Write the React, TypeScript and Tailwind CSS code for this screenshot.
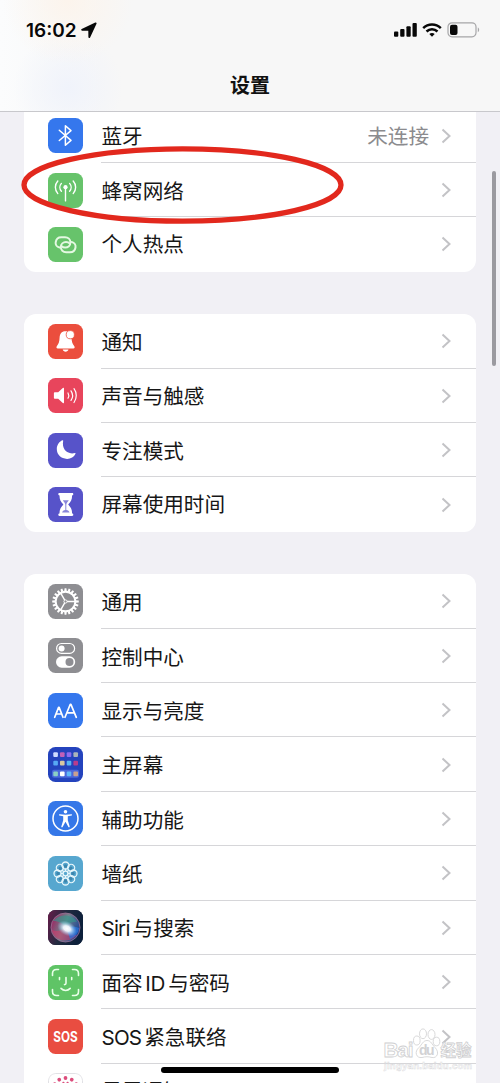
import type { ReactNode } from "react";

type Item = {
  label: string;
  value?: string;
  bg: string;
  icon: ReactNode;
};

const homeDots = [
  ["#cfdcff", "#c060b8", "#8c6cf0", "#a9b4ba"],
  ["#58a8f4", "#d8c8a0", "#58b4f4", "#b83c8c"],
  ["#8cd0c4", "#ffffff", "#60b8f8", "#c8a090"],
];

const gearTeeth = Array.from({ length: 20 }, (_, i) => i * 18);
const petals = Array.from({ length: 8 }, (_, i) => i * 45);

const BluetoothIcon = (
  <path
    d="M11.3 12.2 23 22.4l-5.6 4.8V7.8l5.6 4.8-11.7 9.9"
    fill="none"
    stroke="#fff"
    strokeWidth="1.5"
    strokeLinejoin="round"
    strokeLinecap="round"
  />
);

const CellularIcon = (
  <g fill="none" stroke="#fff" strokeWidth="1.4" strokeLinecap="round">
    <circle cx="17.5" cy="14.2" r="2.1" fill="#fff" stroke="none" />
    <path d="M17.5 14.5v13.4" />
    <path d="M13.4 10.4a5.8 5.8 0 0 0 0 7.8M21.6 10.4a5.8 5.8 0 0 1 0 7.8" />
    <path d="M9.8 8a9.4 9.4 0 0 0 0 12.6M25.2 8a9.4 9.4 0 0 1 0 12.6" />
  </g>
);

const HotspotIcon = (
  <g fill="none" stroke="#e4f8e2" strokeWidth="2" strokeLinecap="round">
    <path d="M11.5 20.6c-2.8-.6-4.2-3-3.8-5.5.5-2.9 2.7-4.800 5.500-4.800h3.800c3.200 0 5.400 2.200 5.400 5.200s-2.400 5.100-5.200 5.100c-1.500 0-2.800-.5-3.600-1.500" />
    <path d="M23.700 15c2.800.6 4.200 3 3.800 5.500-.5 2.900-2.700 4.800-5.500 4.800h-3.800c-3.200 0-5.400-2.200-5.400-5.200S15.200 15 18 15c1.500 0 2.800.5 3.600 1.500" />
  </g>
);

const BellIcon = (
  <g fill="#fff">
    <path d="M17.4 7.2c-3.900 0-5.600 2.700-5.800 6.200-.2 4-.8 6.200-2.700 8.500-.9 1.200-.5 2.500.9 2.500h15.500c1.400 0 1.800-1.300.9-2.500-1.900-2.300-2.500-4.500-2.700-8.500-.2-3.500-2.200-6.200-6.100-6.200z" />
    <path d="M14.700 25.600h5.800c-.4 1.300-1.500 2.100-2.900 2.100s-2.500-.8-2.900-2.100z" />
    <circle cx="22.3" cy="10.7" r="4.100" stroke="#eb4e3d" strokeWidth=".8" />
  </g>
);

const SoundIcon = (
  <g fill="none" stroke="#fff" strokeWidth="1.2" strokeLinecap="round">
    <path
      d="M6.800 14.300h3.400l4.600-4.200c.6-.5 1.200-.2 1.200.5v13.800c0 .7-.6 1-1.200.5l-4.600-4.200H6.800c-.6 0-.9-.3-.9-.8v-4.800c0-.5.3-.8.9-.8z"
      fill="#fff"
      stroke="none"
    />
    <path d="M20 15c.9 1.500.9 3.700 0 5.200M23 12.800c1.900 2.800 1.900 6.800 0 9.600M26 10.700c3 4 3 9.800 0 13.800" />
  </g>
);

const MoonIcon = (
  <path
    d="M15.200 7.800c-1.700 8 3.900 14.200 11.800 12.200.5-.1.700.2.5.7-1.500 3.300-4.600 5.200-8.400 5.200-6 0-10.300-4.200-10.300-9.800 0-3.900 2.200-7.400 5.700-8.800.5-.2.800 0 .7.500z"
    fill="#fff"
  />
);

const HourglassIcon = (
  <g>
    <path
      d="M11.400 6h12.800c.7 0 1.100.5 1.100 1.200s-.5 1.200-1.200 1.200c0 4-1.200 6.200-3.900 9.100 2.700 2.900 3.900 5.100 3.900 9.100.7 0 1.200.5 1.200 1.200s-.4 1.200-1.100 1.200H11.400c-.7 0-1.100-.5-1.100-1.200s.5-1.200 1.200-1.200c0-4 1.200-6.200 3.900-9.100-2.700-2.900-3.900-5.100-3.900-9.100-.7 0-1.200-.5-1.200-1.200S10.700 6 11.400 6z"
      fill="#fff"
    />
    <path
      d="M14.800 13.200h6c-.6 1.500-2.500 2.600-2.500 4.600v5.300c1.800.4 2.700 1.100 3.200 2.300h-7.400c.5-1.200 1.400-1.900 3.200-2.300v-5.300c0-2-1.900-3.100-2.500-4.600z"
      fill="#5753c9"
      opacity=".7"
    />
  </g>
);

const GearIcon = (
  <g fill="none" stroke="#fff">
    {gearTeeth.map((deg) => (
      <path
        key={deg}
        d="M16.600 4.200h1.800l.4 3.200h-2.600z"
        fill="#fff"
        stroke="none"
        transform={`rotate(${deg} 17.5 17.5)`}
      />
    ))}
    <circle cx="17.5" cy="17.5" r="9.8" strokeWidth="1.9" />
    <circle cx="17.5" cy="17.5" r="1.6" strokeWidth="1" />
    <path d="M19.100 17.500h7.900M16.700 16.100l-4-6.900M16.700 18.900l-4 6.900" strokeWidth="1.4" />
  </g>
);

const ControlIcon = (
  <g>
    <rect x="8.6" y="5.5" width="18" height="9.8" rx="4.9" fill="none" stroke="#fff" strokeWidth="1.2" />
    <circle cx="13.6" cy="10.4" r="3" fill="#fff" />
    <rect x="8" y="18.3" width="19.2" height="11.4" rx="5.7" fill="#fff" />
    <circle cx="21.5" cy="24" r="4" fill="#8e8e93" />
  </g>
);

const DisplayIcon = (
  <g fill="none" stroke="#fff" strokeWidth="1.7" strokeLinecap="round" strokeLinejoin="round">
    <path d="m6.700 24.300 3.900-9.900h.5l3.900 9.900M8.100 21h5.500" />
    <path d="m17 24.300 5.300-13h.6l5.400 13M19 19.900h7.300" />
  </g>
);

const HomeScreenIcon = (
  <g>
    <rect x="4" y="22.8" width="27" height="8" rx="2" fill="#4a68dc" />
    {homeDots.map((row, y) =>
      row.map((color, x) => (
        <rect
          key={`${x}-${y}`}
          x={5.3 + x * 6.7}
          y={[5.3, 13.8, 24.6][y]}
          width="4.6"
          height="4.6"
          rx="1"
          fill={color}
        />
      ))
    )}
  </g>
);

const AccessibilityIcon = (
  <g>
    <circle cx="17.5" cy="17.5" r="12.5" fill="none" stroke="#fff" strokeWidth="1.5" />
    <circle cx="17.5" cy="10.8" r="1.8" fill="#fff" />
    <path
      d="M11.700 13.300c3.900.5 7.700.5 11.600 0 .9-.1 1.100 1 .3 1.200l-3.800.8v4l1.900 6.300c.2.800-.9 1.200-1.300.4L17.500 20.700 14.600 26c-.4.800-1.500.4-1.300-.4l1.900-6.300v-4l-3.800-.8c-.8-.2-.6-1.300.3-1.200z"
      fill="#fff"
    />
  </g>
);

const WallpaperIcon = (
  <g fill="none" stroke="#e6f6fb" strokeWidth="1.3">
    {petals.map((deg) => (
      <g key={deg} transform={`rotate(${deg} 17.5 17.5)`}>
        <circle cx="17.5" cy="9.5" r="3.500" />
        <circle cx="17.5" cy="10" r="1.700" fill="#3c86ae" stroke="none" />
        <path d="M17.500 13v2" />
      </g>
    ))}
    <circle cx="17.5" cy="17.5" r="2.4" />
  </g>
);

const SiriIcon = (
  <g>
    <defs>
      <linearGradient id="siri-edge" x1="0" x2="1" y1="0" y2=".3">
        <stop offset="0" stopColor="#671b49" />
        <stop offset=".5" stopColor="#222b40" />
        <stop offset="1" stopColor="#0c203b" />
      </linearGradient>
      <linearGradient id="siri-orb" x1="0" x2="1" y1=".3" y2=".7">
        <stop offset="0" stopColor="#9c2662" />
        <stop offset=".45" stopColor="#70848d" />
        <stop offset="1" stopColor="#143c91" />
      </linearGradient>
      <radialGradient id="siri-glow">
        <stop offset="0" stopColor="#fff" />
        <stop offset=".35" stopColor="#f2f8ff" stopOpacity=".95" />
        <stop offset="1" stopColor="#8ac7ef" stopOpacity="0" />
      </radialGradient>
    </defs>
    <rect width="35" height="35" fill="url(#siri-edge)" />
    <circle cx="17.5" cy="17.5" r="14.5" fill="url(#siri-orb)" stroke="#9c7095" strokeWidth=".8" />
    <path d="M5 11c7-8 19-7 24 1-6-1-9 3-11 6-3-5-7-7-13-7z" fill="#31988c" opacity=".6" />
    <path d="M4 20c6 3 10-1 14-2 3 3 6 7 11 7-8 9-22 7-25-5z" fill="#d73969" opacity=".55" />
    <path d="M18 18c5-2 9-2 13 0-1 6-4 9-9 11-1-4-2-7-4-11z" fill="#2774dd" opacity=".75" />
    <ellipse cx="19" cy="18.5" rx="10.500" ry="7" fill="url(#siri-glow)" transform="rotate(28 19 18.5)" />
  </g>
);

const FaceIdIcon = (
  <g fill="none" stroke="#e9ffe9" strokeWidth="1.6" strokeLinecap="round">
    <path d="M4.500 10.500v-2c0-2.600 1.400-4 4-4h2M24.500 4.500h2c2.600 0 4 1.400 4 4v2M30.500 24.500v2c0 2.600-1.400 4-4 4h-2M10.500 30.500h-2c-2.600 0-4-1.400-4-4v-2" />
    <path d="M11.500 12.600v2M23.700 12.600v2M18 12.600v5.700c0 .9-.5 1.300-1.500 1.300M13 23.400c2.500 2.700 6.700 2.700 9.200 0" />
  </g>
);

const SosIcon = (
  <text
    x="17.5"
    y="22.5"
    textAnchor="middle"
    textLength="24.5"
    lengthAdjust="spacingAndGlyphs"
    fill="#fff"
    className="font-['Inter','Liberation_Sans',sans-serif] text-[14px] font-bold"
  >
    SOS
  </text>
);

const ExposureIcon = (
  <g fill="#dc4d7c">
    <rect x=".5" y=".5" width="34" height="34" rx="7" fill="#fff" stroke="#d9d9de" strokeWidth=".8" />
    {Array.from({ length: 12 }, (_, i) => (
      <circle key={i} cx="17.5" cy="5" r="1.9" transform={`rotate(${i * 30} 17.5 17.5)`} />
    ))}
    {Array.from({ length: 12 }, (_, i) => (
      <circle key={i} cx="17.5" cy="9.6" r="1.1" transform={`rotate(${i * 30 + 15} 17.5 17.5)`} />
    ))}
  </g>
);

const groups: Item[][] = [
  [
    { label: "蓝牙", value: "未连接", bg: "bg-[#3577ed]", icon: BluetoothIcon },
    { label: "蜂窝网络", bg: "bg-[#67c36b]", icon: CellularIcon },
    { label: "个人热点", bg: "bg-[#67c36b]", icon: HotspotIcon },
  ],
  [
    { label: "通知", bg: "bg-[#eb4e3d]", icon: BellIcon },
    { label: "声音与触感", bg: "bg-[#e8455c]", icon: SoundIcon },
    { label: "专注模式", bg: "bg-[#5753c9]", icon: MoonIcon },
    { label: "屏幕使用时间", bg: "bg-[#5753c9]", icon: HourglassIcon },
  ],
  [
    { label: "通用", bg: "bg-[#8e8e92]", icon: GearIcon },
    { label: "控制中心", bg: "bg-[#8e8e92]", icon: ControlIcon },
    { label: "显示与亮度", bg: "bg-[#3577ed]", icon: DisplayIcon },
    { label: "主屏幕", bg: "bg-[#2443bd]", icon: HomeScreenIcon },
    { label: "辅助功能", bg: "bg-[#3577e8]", icon: AccessibilityIcon },
    { label: "墙纸", bg: "bg-[#57a7cf]", icon: WallpaperIcon },
    { label: "Siri与搜索", bg: "bg-[#252b40]", icon: SiriIcon },
    { label: "面容ID与密码", bg: "bg-[#5fc466]", icon: FaceIdIcon },
    { label: "SOS紧急联络", bg: "bg-[#e94d41]", icon: SosIcon },
    { label: "暴露通知", bg: "bg-white", icon: ExposureIcon },
  ],
];

// Latin runs sit slightly tighter than the Chinese text around them
function Label({ text, last }: { text: string; last: boolean }) {
  return (
    <span className={`text-[20.6px] leading-none text-[#161616] ${last ? "pt-[3px]" : "pt-[5px]"}`}>
      {text.split(/([A-Za-z]+)/).filter(Boolean).map((part, i) =>
        /[A-Za-z]/.test(part) ? (
          <span key={i} className={i > 0 ? "ml-[2.5px] mr-[3px] tracking-[-0.2px]" : "mr-[3px] tracking-[-0.8px]"}>
            {part}
          </span>
        ) : (
          part
        )
      )}
    </span>
  );
}

function Row({ item, last }: { item: Item; last: boolean }) {
  return (
    <div className="flex h-[54.4px] items-center pl-6">
      <div className={`size-[35px] shrink-0 overflow-hidden rounded-[7.5px] ${item.bg}`}>
        <svg viewBox="0 0 35 35" className="size-full">
          {item.icon}
        </svg>
      </div>
      <div
        className={`ml-[18px] flex h-full flex-1 items-center border-b pl-[0.5px] pr-[25px] ${
          last ? "border-transparent" : "border-[#d6d6d9]"
        }`}
      >
        <Label text={item.label} last={last} />
        {item.value && (
          <span className="ml-auto pt-[5px] text-[20.6px] leading-none text-[#8b8b8e]">{item.value}</span>
        )}
        <svg
          viewBox="0 0 10 16"
          className={`mt-px h-4 w-[10px] ${item.value ? "ml-[12px]" : "ml-auto"}`}
          fill="none"
          stroke="#c3c3c6"
          strokeWidth="2"
        >
          <path d="m1.500 1.500 7 6.500-7 6.500" />
        </svg>
      </div>
    </div>
  );
}

function StatusBar() {
  return (
    <div className="flex h-[60px] items-center pl-[26px] pr-[20px] text-[#080808]">
      <span className="pt-[2px] text-[19px] font-semibold">16:02</span>
      <svg viewBox="0 0 16 16" className="ml-[4px] size-[16px]" fill="currentColor">
        <path d="M14.300.6.700 7c-1 .5-.7 1.700.4 1.700l6.200.1.100 6.200c0 1.100 1.200 1.400 1.700.4L15.500 1.800c.4-.8-.4-1.600-1.200-1.200z" />
      </svg>
      <div className="ml-auto flex items-center">
        <svg viewBox="0 0 23 14" className="h-[14px] w-[23px]" fill="currentColor">
          <rect x="0" y="8.5" width="4.300" height="5.300" rx="1" />
          <rect x="6.2" y="6" width="4.300" height="7.800" rx="1" />
          <rect x="12.4" y="3.2" width="4.300" height="10.600" rx="1" />
          <rect x="18.5" y="0" width="4.300" height="13.800" rx="1" />
        </svg>
        <svg
          viewBox="0 0 20 14"
          className="ml-[5px] h-[14px] w-[20px]"
          fill="none"
          stroke="currentColor"
          strokeWidth="2.5"
        >
          <path d="M1.200 5.200c5-4.900 12.600-4.900 17.600 0M4.500 8.500c3.200-3 7.800-3 11 0" />
          <path d="M10 13.700 7.300 11c1.500-1.300 3.900-1.300 5.400 0z" fill="currentColor" stroke="none" />
        </svg>
        <svg viewBox="0 0 33 16" className="ml-[5px] h-4 w-[33px]">
          <rect x="1" y=".8" width="28" height="14" rx="4" fill="none" stroke="#a6a6a8" strokeWidth="1.2" />
          <rect x="3" y="2.7" width="7.5" height="10.2" rx="2" fill="#080808" />
          <path d="M30.800 5.500c1.800.7 1.800 4 0 4.700z" fill="#a6a6a8" />
        </svg>
      </div>
    </div>
  );
}

function Watermark() {
  return (
    <svg
      viewBox="0 0 120 54"
      className="absolute left-[380px] top-[1020px] h-[54px] w-[120px]"
      fill="#fff"
      stroke="#cfcfd1"
      strokeWidth=".8"
    >
      <g className="font-['Liberation_Sans','Noto_Sans_CJK_SC',sans-serif] font-bold">
        <text x="3.5" y="37" fontSize="21" textLength="30">
          Bai
        </text>
        <ellipse cx="36.8" cy="20.5" rx="3.3" ry="4.5" />
        <ellipse cx="43" cy="13.8" rx="3.5" ry="4.9" />
        <ellipse cx="51.5" cy="14.5" rx="3.5" ry="4.9" />
        <ellipse cx="56.5" cy="21.5" rx="3.3" ry="4.3" />
        <path d="M47 20.500c4 0 5 4 8 7 5 5 2 11-3 10-4-1-6-1-10 0-6 1-8-6-3-10 3-3 4-7 8-7z" />
        <text x="39" y="35" fontSize="14" textLength="15.5" fill="#d2d2d4" stroke="none">
          du
        </text>
        <text x="60.5" y="35.5" fontSize="15.5" textLength="31">
          经验
        </text>
        <text x="4" y="48.5" fontSize="9.5" textLength="88" strokeWidth=".5" stroke="#dcdcde">
          jingyan.baidu.com
        </text>
      </g>
    </svg>
  );
}

export default function App() {
  return (
    <div className="relative h-[1083px] w-[500px] overflow-hidden bg-[#f1f0f5] font-['Inter','Noto_Sans_CJK_SC',sans-serif]">
      <header className="relative z-10 h-[112px] border-b border-[#c8c8cc] bg-[#f7f7f7] bg-[radial-gradient(circle_at_68px_0px,#fcf4ec_0,transparent_65px),radial-gradient(circle_at_68px_88px,#f0f3fb_0,transparent_55px),linear-gradient(90deg,#fbfcfd_0,#f7f7f7_100px)]">
        <StatusBar />
        <h1 className="flex h-[52px] items-center justify-center text-[20px] font-bold text-[#111]">设置</h1>
      </header>

      <main className="-mt-[3.5px] flex flex-col gap-[42.5px] px-6">
        {groups.map((items, i) => (
          <section key={i} className={`overflow-hidden bg-white ${i === 0 ? "rounded-b-[12px]" : "rounded-[12px]"}`}>
            {items.map((item, j) => (
              <Row key={item.label} item={item} last={j === items.length - 1} />
            ))}
          </section>
        ))}
      </main>

      {/* Highlight around the cellular row */}
      <svg viewBox="0 0 326 82" className="absolute left-[20px] top-[144px] h-[82px] w-[326px]" fill="none">
        <ellipse cx="162.5" cy="41" rx="158.5" ry="36.2" stroke="#e2281d" strokeWidth="5.3" />
      </svg>

      <div className="absolute left-[492px] top-[171px] h-[195px] w-[4px] rounded-full bg-[#9b9aa0]" />
      <Watermark />
      <div className="absolute left-[161px] top-[1067px] h-[6px] w-[178px] rounded-full bg-black" />
    </div>
  );
}
